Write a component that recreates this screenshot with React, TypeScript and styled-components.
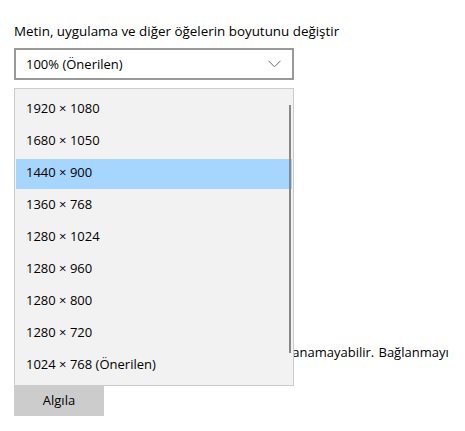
import styled, { createGlobalStyle } from 'styled-components';

const GlobalStyle = createGlobalStyle`
  html, body {
    margin: 0;
    background: #ffffff;
  }
  body {
    font-family: "Open Sans", "Noto Sans", "Liberation Sans", sans-serif;
    color: #000000;
    overflow: hidden;
  }
`;

const Page = styled.div`
  position: relative;
  width: 465px;
  height: 431px;
  box-sizing: border-box;
  padding: 21px 0 0 14px;
  overflow: hidden;
`;

const Label = styled.div`
  font-size: 13.4px;
  line-height: 20px;
  margin-bottom: 7px;
  white-space: nowrap;
`;

const SelectBox = styled.div`
  width: 280px;
  height: 32px;
  box-sizing: border-box;
  border: 2px solid #999999;
  padding: 0 10px;
  display: flex;
  align-items: center;
  justify-content: space-between;
  font-size: 13px;
`;

const Chevron = styled.svg`
  width: 13px;
  height: 8px;
  margin-right: 1px;
`;

const Note = styled.div`
  margin-top: 262px;
  width: 439px;
  overflow: hidden;
  font-size: 13px;
  line-height: 20px;
  white-space: nowrap;
  word-spacing: 0.9px;
`;

const Button = styled.button`
  display: block;
  margin-top: 24px;
  width: 90px;
  height: 30px;
  border: none;
  background: #cccccc;
  font-family: inherit;
  font-size: 13px;
  color: #000000;
  padding: 0 0 2px;
`;

const Dropdown = styled.div`
  position: absolute;
  top: 88px;
  left: 14px;
  width: 280px;
  height: 298px;
  box-sizing: border-box;
  border: 1px solid #cccccc;
  background: #f2f2f2;
  padding-top: 6px;
`;

const Item = styled.div<{ selected?: boolean }>`
  height: 30px;
  box-sizing: border-box;
  margin: 0 1px 2px;
  padding: 0 0 4px 10px;
  display: flex;
  align-items: center;
  font-size: 13px;
  background: ${({ selected }) => (selected ? '#a6d6fe' : 'transparent')};
`;

const Thumb = styled.div`
  position: absolute;
  top: 16px;
  right: 2px;
  width: 2px;
  height: 248px;
  background: #878787;
`;

const resolutions = [
  '1920 × 1080',
  '1680 × 1050',
  '1440 × 900',
  '1360 × 768',
  '1280 × 1024',
  '1280 × 960',
  '1280 × 800',
  '1280 × 720',
  '1024 × 768 (Önerilen)',
];

export default function App() {
  return (
    <>
      <GlobalStyle />
      <Page>
        <Label>Metin, uygulama ve diğer öğelerin boyutunu değiştir</Label>
        <SelectBox>
          <span>100% (Önerilen)</span>
          <Chevron viewBox="0 0 13 8">
            <path d="M0.5 0.8 L6.5 6.8 L12.5 0.8" fill="none" stroke="#6b6b6b" strokeWidth="1" />
          </Chevron>
        </SelectBox>
        <Note>Eski ekranlar her zaman otomatik olarak bağlanamayabilir. Bağlanmayı denemek için Algıla'yı seçin.</Note>
        <Button>Algıla</Button>
        <Dropdown>
          {resolutions.map((r) => (
            <Item key={r} selected={r === '1440 × 900'}>
              {r}
            </Item>
          ))}
          <Thumb />
        </Dropdown>
      </Page>
    </>
  );
}
